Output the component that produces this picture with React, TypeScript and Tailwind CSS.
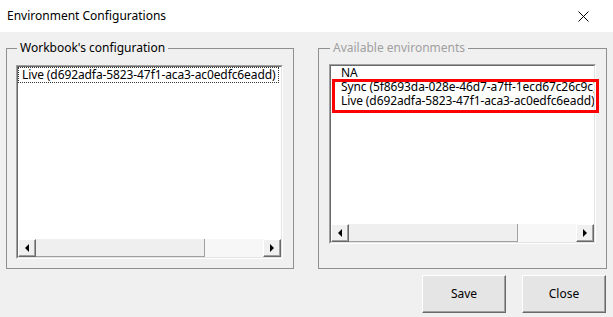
const workbookItems = ['Live (d692adfa-5823-47f1-aca3-ac0edfc6eadd)'];

const availableItems = [
  'NA',
  'Sync (5f8693da-028e-46d7-a7ff-1ecd67c26c9c)',
  'Live (d692adfa-5823-47f1-aca3-ac0edfc6eadd)',
];

function ScrollButton({ dir }: { dir: 'left' | 'right' }) {
  return (
    <div className="flex w-[18px] items-center justify-center border-t border-l border-t-white border-l-white border-r border-b border-r-[#696969] border-b-[#696969] bg-[#f0f0f0] shadow-[inset_-1px_-1px_0_#a0a0a0]">
      {dir === 'left' ? (
        <div className="h-0 w-0 border-y-[4px] border-r-[4px] border-y-transparent border-r-black" />
      ) : (
        <div className="h-0 w-0 border-y-[4px] border-l-[4px] border-y-transparent border-l-black" />
      )}
    </div>
  );
}

function HScrollbar() {
  return (
    <div className="flex h-[18px] shrink-0 bg-[#f7f7f7]">
      <ScrollButton dir="left" />
      <div className="flex flex-1">
        <div className="w-[169px] border-r border-b border-r-[#a0a0a0] border-b-[#a0a0a0] bg-[#efefef]" />
      </div>
      <ScrollButton dir="right" />
    </div>
  );
}

function ListBox({
  items,
  height,
  focused,
  padLeft,
  children,
}: {
  items: string[];
  height: string;
  focused?: number;
  padLeft: string;
  children?: React.ReactNode;
}) {
  return (
    <div className={`relative w-[267px] ${height} border-t border-l border-t-[#a0a0a0] border-l-[#a0a0a0] border-r border-b border-r-white border-b-white`}>
      <div className="flex h-full flex-col border-t border-l border-t-[#696969] border-l-[#696969] border-r border-b border-r-[#e3e3e3] border-b-[#e3e3e3] bg-white">
        <div className="flex-1 overflow-hidden">
          {items.map((item, i) => (
            <div
              key={i}
              className={`whitespace-nowrap leading-[14px] tracking-[-0.1px] ${padLeft} ${
                i === focused ? 'mr-[2px] border border-dotted border-[#333]' : ''
              }`}
            >
              {item}
            </div>
          ))}
        </div>
        <HScrollbar />
      </div>
      {children}
    </div>
  );
}

export default function App() {
  return (
    <div className="flex h-[317px] w-[613px] flex-col bg-[#f0f0f0] font-['Noto_Sans',sans-serif] text-[12px] text-black">
      <div className="flex h-[32px] shrink-0 items-center justify-between bg-white pl-[7px] pr-[24px]">
        <span>Environment Configurations</span>
        <svg width="11" height="11" viewBox="0 0 11 11" className="text-black">
          <path d="M0.5 0.5 L10.5 10.5 M10.5 0.5 L0.5 10.5" stroke="currentColor" strokeWidth="1" />
        </svg>
      </div>

      <div className="mt-[8px] flex gap-[24px] pl-[6px]">
        <fieldset className="w-[288px] border border-[#8f8f8f] pb-[9px] pl-[9px]">
          <legend className="ml-[1px] px-[3px] leading-[16px]">Workbook's configuration</legend>
          <div className="mt-[9px]">
            <ListBox items={workbookItems} height="h-[194px]" focused={0} padLeft="pl-[3px]" />
          </div>
        </fieldset>

        <fieldset className="w-[289px] border border-[#8f8f8f] pl-[10px]">
          <legend className="ml-[1px] px-[3px] leading-[16px] text-[#a0a0a0]">Available environments</legend>
          <div className="mt-[8px]">
            <ListBox items={availableItems} height="h-[180px]" padLeft="pl-[10px]">
              <div className="absolute left-[2px] top-[14px] h-[34px] w-[267px] border-[3px] border-[#ff0000]" />
            </ListBox>
          </div>
        </fieldset>
      </div>

      <div className="mt-[6px] flex justify-end gap-[16px] pr-[7px]">
        {['Save', 'Close'].map((label) => (
          <button
            key={label}
            className="flex h-[38px] w-[84px] items-center justify-center border-t border-l border-t-white border-l-white border-r border-b border-r-[#696969] border-b-[#696969] bg-[#e5e5e5] shadow-[inset_-1px_-1px_0_#a0a0a0]"
          >
            {label}
          </button>
        ))}
      </div>
    </div>
  );
}
